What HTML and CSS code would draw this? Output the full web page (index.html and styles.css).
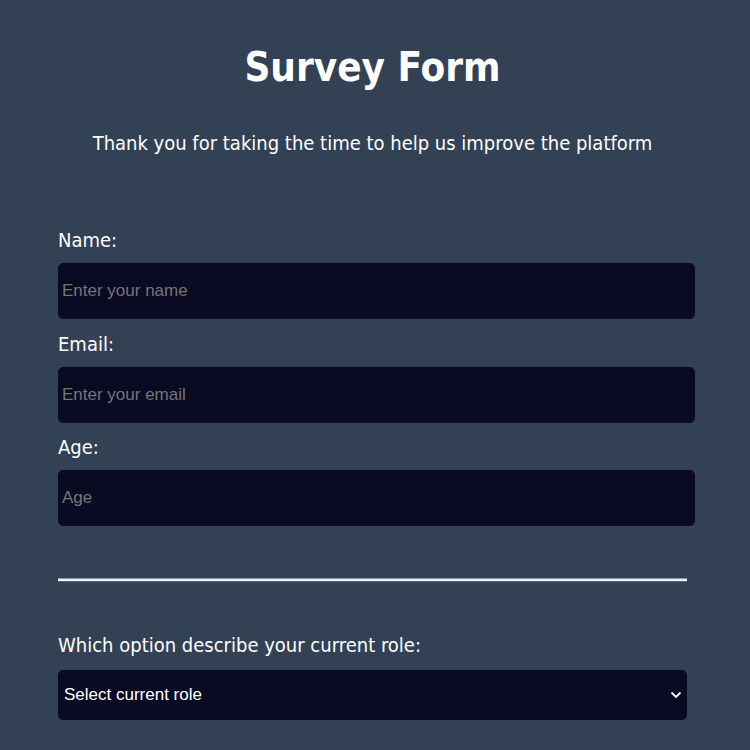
FILE: index.html
```html
<!DOCTYPE html>
<html lang="en">
<head>
<meta charset="utf-8">
<title>Survey Form</title>
<link rel="stylesheet" href="styles.css">
</head>
<body>
<h1 class="title">Survey Form</h1>
<p class="description">Thank you for taking the time to help us improve the platform</p>
<form class="form">
  <fieldset class="group">
    <label class="label" for="name">Name:</label>
    <input class="field" id="name" type="text" placeholder="Enter your name">
    <label class="label" for="email">Email:</label>
    <input class="field" id="email" type="email" placeholder="Enter your email">
    <label class="label" for="age">Age:</label>
    <input class="field" id="age" type="number" placeholder="Age">
  </fieldset>
  <hr class="rule">
  <fieldset class="group">
    <label class="label role-label" for="role">Which option describe your current role:</label>
    <div class="select-wrap">
      <select class="select" id="role">
        <option>Select current role</option>
      </select>
      <svg class="chevron" width="12" height="8" viewBox="0 0 12 8"><path d="M1.5 1.5 L6 6 L10.5 1.5" fill="none" stroke="#ffffff" stroke-width="1.8"/></svg>
    </div>
  </fieldset>
</form>
</body>
</html>
```
FILE: styles.css
```css
html, body {
  margin: 0;
  padding: 0;
}
body {
  background: #334155;
  color: #ffffff;
  font-family: "DejaVu Sans", Verdana, sans-serif;
  font-stretch: condensed;
  width: 750px;
  height: 750px;
  overflow: hidden;
}
.title {
  margin: 0;
  padding-top: 42px;
  text-align: center;
  font-size: 40px;
  line-height: 50px;
  font-weight: bold;
  width: 745px;
}
.description {
  margin: 39px 0 0 0;
  text-align: center;
  font-size: 20px;
  line-height: 24px;
  width: 745px;
}
.form {
  width: 629px;
  margin: 73px 0 0 58px;
}
.group {
  border: none;
  margin: 0;
  padding: 0;
}
.label {
  display: block;
  font-size: 20px;
  line-height: 24px;
  margin: 0 0 11px 0;
}
.field {
  display: block;
  width: 100%;
  height: 54px;
  box-sizing: content-box;
  padding: 0 3px;
  margin: 0 0 12.5px 0;
  border: 1px solid #0a0a23;
  border-radius: 5px;
  background: #0a0a23;
  color: #ffffff;
  font-family: "Liberation Sans", Arial, sans-serif;
  font-size: 17px;
  outline: none;
}
.field::placeholder {
  color: #757575;
}
.rule {
  margin: 39px 0 0 0;
  height: 2px;
  border: none;
  border-top: 1px solid #8a96a8;
  border-bottom: 1px solid #5b6778;
  background: #eef2f7;
}
.role-label {
  margin-top: 51px;
  margin-bottom: 13px;
}
.select-wrap {
  position: relative;
  width: 629px;
  height: 50px;
}
.select {
  appearance: none;
  -webkit-appearance: none;
  width: 100%;
  height: 50px;
  box-sizing: border-box;
  padding: 0 5px;
  border: 1px solid #0a0a23;
  border-radius: 5px;
  background: #0a0a23;
  color: #ffffff;
  font-family: "Liberation Sans", Arial, sans-serif;
  font-size: 17px;
}
.chevron {
  position: absolute;
  right: 5px;
  top: 21px;
}
```
